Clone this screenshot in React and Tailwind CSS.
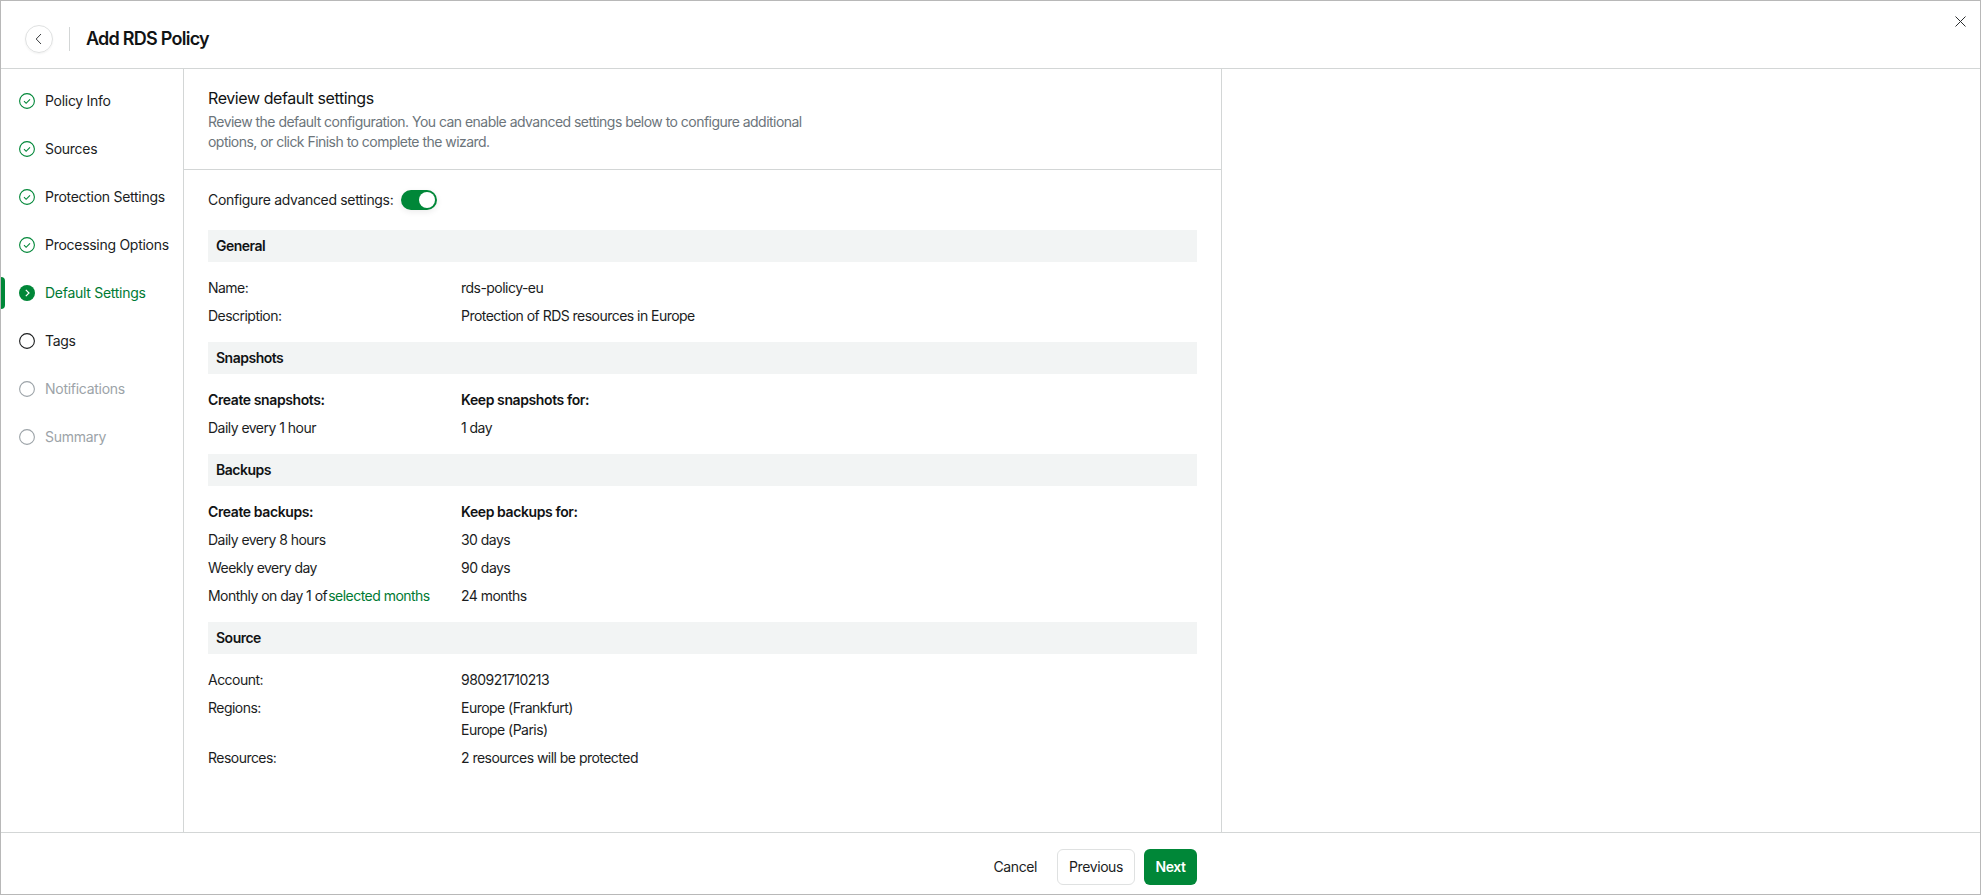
import React from 'react';

const steps = [
  { label: 'Policy Info', state: 'done' },
  { label: 'Sources', state: 'done' },
  { label: 'Protection Settings', state: 'done' },
  { label: 'Processing Options', state: 'done' },
  { label: 'Default Settings', state: 'active' },
  { label: 'Tags', state: 'next' },
  { label: 'Notifications', state: 'disabled' },
  { label: 'Summary', state: 'disabled' },
];

const StepIcon = ({ state }) => {
  if (state === 'done') {
    return (
      <svg width="16" height="16" viewBox="0 0 16 16" fill="none" className="shrink-0">
        <circle cx="8" cy="8" r="7.4" stroke="#008738" strokeWidth="1.1" />
        <path d="M5 8.2l2.1 2.1L11 6.3" stroke="#008738" strokeWidth="1.1" />
      </svg>
    );
  }
  if (state === 'active') {
    return (
      <svg width="16" height="16" viewBox="0 0 16 16" fill="none" className="shrink-0">
        <circle cx="8" cy="8" r="8" fill="#008738" />
        <path d="M6.8 4.8L10 8l-3.2 3.2" stroke="#fff" strokeWidth="1.2" />
      </svg>
    );
  }
  return (
    <svg width="16" height="16" viewBox="0 0 16 16" fill="none" className="shrink-0">
      <circle cx="8" cy="8" r="7.4" stroke={state === 'next' ? '#1b1d1e' : '#9ca3a8'} strokeWidth="1.1" />
    </svg>
  );
};

const Step = ({ label, state }) => (
  <div className="relative flex h-12 items-center gap-2.5 pl-[18px] tracking-[-0.28px]">
    {state === 'active' && <div className="absolute left-0 top-2 h-8 w-1 rounded-r bg-[#008738]" />}
    <StepIcon state={state} />
    <span
      className={
        state === 'active'
          ? 'text-[#007a33]'
          : state === 'disabled'
            ? 'text-[#9ca3a8]'
            : 'text-[#1b1d1e]'
      }
    >
      {label}
    </span>
  </div>
);

const SectionHeader = ({ children }) => (
  <div className="mb-3 flex h-8 items-center bg-[#f2f4f4] pl-2 font-semibold tracking-[-0.5px] text-[#111314]">{children}</div>
);

const Row = ({ left, right, bold }) => (
  <div className={`grid grid-cols-[253px_1fr] py-[3px] ${bold ? 'font-semibold tracking-[-0.4px] text-[#111314]' : 'tracking-[-0.53px]'}`}>
    <div>{left}</div>
    <div>{right}</div>
  </div>
);

const App = () => {
  return (
    <div className="flex h-[895px] flex-col border border-[#b8b8b8] bg-white font-['Inter',sans-serif] text-sm leading-[22px] text-[#1b1d1e]">
      {/* Header */}
      <div className="flex h-[68px] shrink-0 items-center border-b border-[#d3d6d6] pl-6 pt-[9px]">
        <button className="flex h-7 w-7 items-center justify-center rounded-full border border-[#dfe1e1] shadow-[0_1px_2px_rgba(0,0,0,0.05)]">
          <svg width="10" height="12" viewBox="0 0 10 12" fill="none">
            <path d="M7 1L2.2 6 7 11" stroke="#3a3d3f" strokeWidth="1" />
          </svg>
        </button>
        <div className="ml-4 mr-4 h-6 w-px bg-[#d3d6d6]" />
        <h1 className="text-lg font-semibold tracking-[-0.75px] text-[#111314]">Add RDS Policy</h1>
        <button className="ml-auto mr-[14px] self-start mt-[6px]">
          <svg width="11" height="11" viewBox="0 0 11 11" fill="none" className="block">
            <path d="M.5.5l10 10M10.5.5l-10 10" stroke="#2b2e30" strokeWidth="1" />
          </svg>
        </button>
      </div>

      {/* Body */}
      <div className="flex min-h-0 flex-1">
        <div className="w-[183px] shrink-0 border-r border-[#d3d6d6] pt-2">
          {steps.map((s) => (
            <Step key={s.label} label={s.label} state={s.state} />
          ))}
        </div>

        <div className="w-[1038px] shrink-0 border-r border-[#d3d6d6]">
          <div className="h-[101px] border-b border-[#d3d6d6] px-6 pt-[17px]">
            <h2 className="text-base font-normal leading-6 tracking-[-0.41px] text-[#111314]">Review default settings</h2>
            <p className="mt-[2px] max-w-[610px] leading-[20px] tracking-[-0.53px] text-[#6c757b]">
              Review the default configuration. You can enable advanced settings below to configure additional options, or click Finish to complete the wizard.
            </p>
          </div>

          <div className="px-6">
            <div className="flex h-[60px] items-center gap-2">
              <span className="tracking-[-0.33px]">Configure advanced settings:</span>
              <div className="flex h-5 w-9 items-center justify-end rounded-full bg-[#008738] pr-[2px] shadow-[0_2px_6px_rgba(0,0,0,0.08)]">
                <div className="h-4 w-4 rounded-full bg-white" />
              </div>
            </div>

            <SectionHeader>General</SectionHeader>
            <div className="mb-3">
              <Row left="Name:" right="rds-policy-eu" />
              <Row left="Description:" right="Protection of RDS resources in Europe" />
            </div>

            <SectionHeader>Snapshots</SectionHeader>
            <div className="mb-3">
              <Row bold left="Create snapshots:" right="Keep snapshots for:" />
              <Row left="Daily every 1 hour" right="1 day" />
            </div>

            <SectionHeader>Backups</SectionHeader>
            <div className="mb-3">
              <Row bold left="Create backups:" right="Keep backups for:" />
              <Row left="Daily every 8 hours" right="30 days" />
              <Row left="Weekly every day" right="90 days" />
              <Row
                left={
                  <>
                    Monthly on day 1 of<span className="ml-px text-[#007a33]">selected months</span>
                  </>
                }
                right="24 months"
              />
            </div>

            <SectionHeader>Source</SectionHeader>
            <div>
              <Row left="Account:" right="980921710213" />
              <Row
                left="Regions:"
                right={
                  <>
                    <div>Europe (Frankfurt)</div>
                    <div>Europe (Paris)</div>
                  </>
                }
              />
              <Row left="Resources:" right="2 resources will be protected" />
            </div>
          </div>
        </div>
      </div>

      {/* Footer */}
      <div className="flex h-[62px] shrink-0 items-center border-t border-[#d3d6d6] pt-[7px]">
        <div className="flex w-[1196px] items-center justify-end tracking-[-0.4px]">
          <button className="mr-5 font-normal text-[#1b1d1e]">Cancel</button>
          <button className="mr-[9px] h-9 w-[78px] rounded-md border border-[#dfe1e1] font-normal text-[#1b1d1e]">Previous</button>
          <button className="h-9 w-[53px] rounded-md bg-[#008738] font-semibold text-white">Next</button>
        </div>
      </div>
    </div>
  );
};

export default App;
